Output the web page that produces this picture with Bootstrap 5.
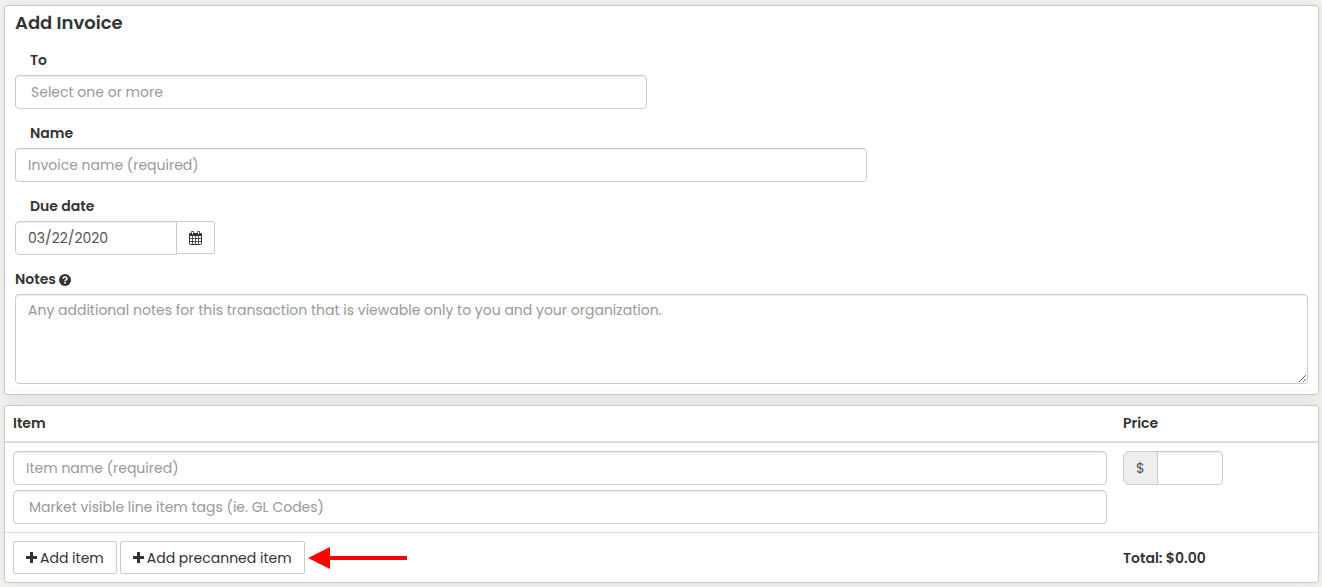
<!DOCTYPE html>
<html lang="en">
<head>
<meta charset="utf-8">
<meta name="viewport" content="width=device-width, initial-scale=1">
<title>Add Invoice</title>
<link href="https://cdn.jsdelivr.net/npm/bootstrap@5.3.0/dist/css/bootstrap.min.css" rel="stylesheet">
<style>
  body { background: #f4f5f1; color: #333; font-family: Poppins, Inter, sans-serif; font-size: 14px; line-height: 20px; }
  .page { padding: 5px 3px 4px 4px; }
  .panel { background: #fff; border: 1px solid #c8c9cc; border-radius: 3px; box-shadow: 0 0 18px 3px rgba(90, 95, 80, .09); }
  .invoice-panel { padding: 5px 10px 10px; }
  .page-title { font-size: 18px; font-weight: 600; line-height: 24px; margin-bottom: 15px; }
  .row { --bs-gutter-x: 30px; }
  .field-label { display: block; margin-bottom: 5px; font-weight: 600; }
  .indent { padding-left: 15px; }
  .field { margin-bottom: 14px; }
  .form-control { border: 1px solid #ccc; border-radius: 4px; height: 34px; padding: 6px 12px; font-size: 14px; line-height: 20px; color: #555; box-shadow: inset 0 1px 1px rgba(0, 0, 0, .075); }
  .form-control::placeholder { color: #999; }
  .form-control.tag-box { padding-left: 15px; }
  textarea.form-control { height: 90px; resize: both; display: block; padding-top: 5px; }
  .date-group { max-width: 200px; }
  .btn-plain { --bs-btn-bg: #fff; --bs-btn-color: #333; --bs-btn-border-color: #ccc; --bs-btn-hover-bg: #e6e6e6; --bs-btn-hover-border-color: #adadad; --bs-btn-padding-x: 12px; --bs-btn-padding-y: 0; --bs-btn-border-radius: 2px; --bs-btn-font-size: 14px; --bs-btn-line-height: 20px; height: 33px; display: inline-flex; align-items: center; }
  .date-group .btn-plain { --bs-btn-padding-x: 12px; }
  .items-panel { margin-top: 10px; }
  .items-table { --bs-table-color: #333; --bs-table-bg: transparent; border-color: #ddd; }
  .items-table > :not(caption) > * > * { padding: 8px; border-bottom-width: 0; }
  .items-table > thead > tr > th { border-bottom: 2px solid #ddd; padding-top: 7px; font-weight: 600; }
  .items-table > tfoot > tr > td { border-top: 1px solid #ddd; }
  .price-col { width: 203px; }
  .item-fields { gap: 5px; }
  .price-group { width: 100px; }
  .input-group-text { background: #eee; border-color: #ccc; color: #555; padding: 6px 12px; font-size: 14px; line-height: 20px; }
  .actions, .actions .btn { gap: 3px; }
  .total { font-weight: 600; }
</style>
</head>
<body>
<main class="page">
  <form>
    <section class="panel invoice-panel">
      <h1 class="page-title">Add Invoice</h1>
      <div class="row"><div class="col-6 field">
        <label class="field-label indent" for="to">To</label>
        <input class="form-control tag-box" id="to" type="text" placeholder="Select one or more">
      </div></div>
      <div class="row"><div class="col-8 field">
        <label class="field-label indent" for="name">Name</label>
        <input class="form-control" id="name" type="text" placeholder="Invoice name (required)">
      </div></div>
      <div class="field">
        <label class="field-label indent" for="due">Due date</label>
        <div class="input-group date-group align-items-start">
          <input class="form-control" id="due" type="text" value="03/22/2020">
          <button class="btn btn-plain" type="button" aria-label="Choose date">
            <svg width="13" height="14" viewBox="0 0 13 14" aria-hidden="true"><rect x=".5" y="2.500" width="12" height="11" rx=".8" fill="none" stroke="#333"/><path d="M0 2.500h13V5H0Z" fill="#333"/><path d="M3.500 5v8M6.500 5v8M9.500 5v8M1 7.500h11M1 10.500h11" stroke="#333" stroke-width=".8" fill="none"/><path d="M3.500 0v3.500M9.500 0v3.500" stroke="#333" stroke-width="2.400"/><path d="M3.500 .8v2.400M9.500 .8v2.400" stroke="#fff" stroke-width="1"/></svg>
          </button>
        </div>
      </div>
      <label class="field-label" for="notes">Notes
        <svg width="12" height="12" viewBox="0 0 12 12" aria-hidden="true"><circle cx="6" cy="6" r="6" fill="#333"/><path d="M4 4.600Q4.200 3 6 3T8 4.500Q8 5.400 7 5.900 6.100 6.300 6.100 7.300" fill="none" stroke="#fff" stroke-width="1.600"/><rect x="5.200" y="8" width="1.700" height="1.600" fill="#fff"/></svg>
      </label>
      <textarea class="form-control" id="notes" placeholder="Any additional notes for this transaction that is viewable only to you and your organization."></textarea>
    </section>

    <section class="panel items-panel">
      <table class="table items-table mb-0">
        <thead><tr><th>Item</th><th class="price-col">Price</th></tr></thead>
        <tbody><tr>
          <td>
            <div class="d-flex flex-column item-fields">
              <input class="form-control" type="text" placeholder="Item name (required)" aria-label="Item name">
              <input class="form-control tag-box" type="text" placeholder="Market visible line item tags (ie. GL Codes)" aria-label="Line item tags">
            </div>
          </td>
          <td>
            <div class="input-group price-group">
              <span class="input-group-text">$</span>
              <input class="form-control" type="text" aria-label="Price">
            </div>
          </td>
        </tr></tbody>
        <tfoot><tr>
          <td>
            <div class="d-flex align-items-center actions">
              <button class="btn btn-plain" type="button"><svg width="11" height="11" viewBox="0 0 11 11" aria-hidden="true"><path d="M4 0h3v4h4v3H7v4H4V7H0V4h4Z" fill="#333"/></svg>Add item</button>
              <button class="btn btn-plain" type="button"><svg width="11" height="11" viewBox="0 0 11 11" aria-hidden="true"><path d="M4 0h3v4h4v3H7v4H4V7H0V4h4Z" fill="#333"/></svg>Add precanned item</button>
              <svg width="99" height="22" viewBox="0 0 99 22" aria-hidden="true"><path d="M0 11 22 0V9H99V13H22V22Z" fill="#f00"/></svg>
            </div>
          </td>
          <td class="total align-middle">Total: $0.00</td>
        </tr></tfoot>
      </table>
    </section>
  </form>
</main>
<script src="https://cdn.jsdelivr.net/npm/bootstrap@5.3.0/dist/js/bootstrap.bundle.min.js"></script>
</body>
</html>
